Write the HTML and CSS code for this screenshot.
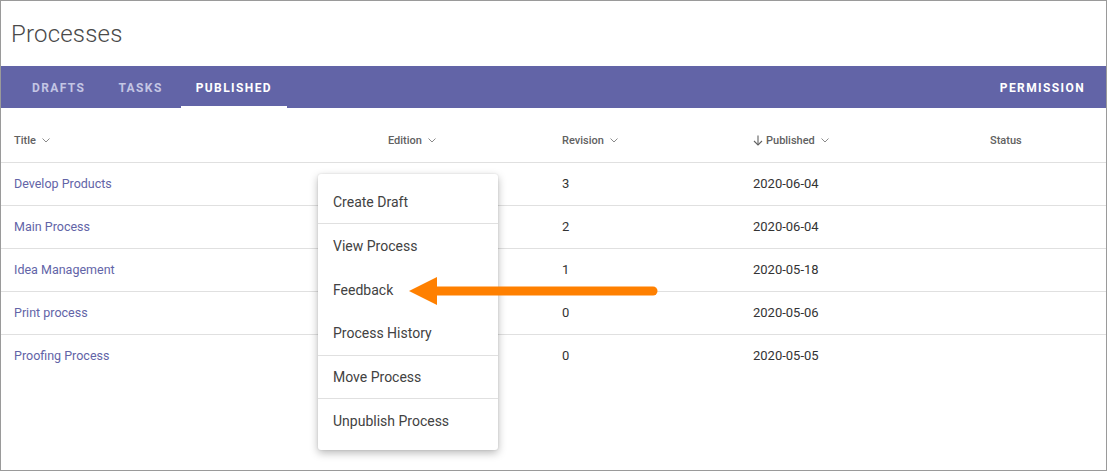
FILE: index.html
```html
<!DOCTYPE html>
<html>
<head>
<meta charset="utf-8">
<link rel="stylesheet" href="styles.css">
</head>
<body>
<div class="frame">
  <header class="page-header"><h1 class="page-title">Processes</h1></header>
  <nav class="tabbar">
    <div class="tabs">
      <a class="tab">Drafts</a>
      <a class="tab">Tasks</a>
      <a class="tab active">Published</a>
    </div>
    <a class="tab">Permission</a>
  </nav>
  <div class="table">
    <div class="row head">
      <div class="cell">Title <svg class="chev" viewBox="0 0 8 5"><polyline points="0.5,0.5 4,4 7.5,0.5"/></svg></div>
      <div class="cell">Edition <svg class="chev" viewBox="0 0 8 5"><polyline points="0.5,0.5 4,4 7.5,0.5"/></svg></div>
      <div class="cell">Revision <svg class="chev" viewBox="0 0 8 5"><polyline points="0.5,0.5 4,4 7.5,0.5"/></svg></div>
      <div class="cell"><svg class="down" viewBox="0 0 10 11"><line x1="5" y1="0.5" x2="5" y2="10"/><polyline points="1,6 5,10 9,6"/></svg>Published <svg class="chev" viewBox="0 0 8 5"><polyline points="0.5,0.5 4,4 7.5,0.5"/></svg></div>
      <div class="cell">Status</div>
    </div>
    <div class="row"><div class="cell link">Develop Products</div><div class="cell"></div><div class="cell">3</div><div class="cell">2020-06-04</div><div class="cell"></div></div>
    <div class="row"><div class="cell link">Main Process</div><div class="cell"></div><div class="cell">2</div><div class="cell">2020-06-04</div><div class="cell"></div></div>
    <div class="row"><div class="cell link">Idea Management</div><div class="cell"></div><div class="cell">1</div><div class="cell">2020-05-18</div><div class="cell"></div></div>
    <div class="row"><div class="cell link">Print process</div><div class="cell"></div><div class="cell">0</div><div class="cell">2020-05-06</div><div class="cell"></div></div>
    <div class="row last"><div class="cell link">Proofing Process</div><div class="cell"></div><div class="cell">0</div><div class="cell">2020-05-05</div><div class="cell"></div></div>
  </div>
  <ul class="menu">
    <li class="item sep">Create Draft</li>
    <li class="item">View Process</li>
    <li class="item">Feedback</li>
    <li class="item sep">Process History</li>
    <li class="item sep">Move Process</li>
    <li class="item">Unpublish Process</li>
  </ul>
  <svg class="pointer" viewBox="0 0 260 30" width="260" height="30">
    <line x1="30" y1="15" x2="246" y2="15" stroke="#ff8000" stroke-width="9" stroke-linecap="round"/>
    <polygon points="2,15 30,1 30,29" fill="#ff8000"/>
  </svg>
</div>
</body>
</html>
```

FILE: styles.css
```css
* { box-sizing: border-box; }
html, body { margin: 0; padding: 0; background: #fff; }
body { font-family: Roboto, "Noto Sans", sans-serif; }

.frame {
  position: relative;
  width: 1107px;
  height: 471px;
  border: 1px solid #9a9a9a;
  overflow: hidden;
}

.page-header {
  height: 65px;
  display: flex;
  align-items: center;
  padding-left: 10px;
}
.page-title {
  margin: 0;
  font-family: "Roboto Light", Roboto, sans-serif;
  font-size: 24px;
  font-weight: 300;
  color: #4a4a4a;
  letter-spacing: 0.2px;
}

.tabbar {
  height: 42px;
  background: #6264a7;
  display: flex;
  justify-content: space-between;
  padding: 0 6px 0 16px;
}
.tabs { display: flex; gap: 3px; }
.tab {
  display: flex;
  align-items: center;
  padding: 3px 15px 0;
  font-size: 12px;
  font-weight: 700;
  letter-spacing: 1.4px;
  text-transform: uppercase;
  color: #c4c6e4;
  border-bottom: 2px solid transparent;
}
.tab.active { color: #fff; border-bottom-color: #fff; }
.tabbar > .tab { color: #fff; }

.row {
  display: grid;
  grid-template-columns: 374px 174px 191px 237px 1fr;
  padding-left: 13px;
  padding-bottom: 2px;
  height: 43px;
  align-items: center;
  border-bottom: 1px solid #e0e0e0;
  font-size: 13px;
  color: #333;
}
.row.last { border-bottom: none; padding-bottom: 3px; }
.row.head {
  height: 55px;
  padding-top: 10px;
  padding-bottom: 0;
  font-size: 11px;
  font-weight: 500;
  color: #616161;
}
.cell { display: flex; align-items: center; }
.link { color: #6264a7; font-size: 12.5px; }

.chev {
  width: 8px; height: 5px;
  margin-left: 6px;
  fill: none;
  stroke: #8a8a8a;
  stroke-width: 1;
}
.down {
  width: 10px; height: 11px;
  margin-right: 3px;
  fill: none;
  stroke: #616161;
  stroke-width: 1.1;
}

.menu {
  position: absolute;
  left: 317px;
  top: 173px;
  width: 180px;
  margin: 0;
  padding: 6px 0 7px;
  list-style: none;
  background: #fff;
  border-radius: 3px;
  box-shadow: 0 3px 9px rgba(0,0,0,0.28), 0 0 2px rgba(0,0,0,0.12);
}
.item {
  height: 44px;
  display: flex;
  align-items: center;
  padding-left: 15px;
  font-size: 14px;
  color: #424242;
}
.item.sep { border-bottom: 1px solid #e0e0e0; }
.item:nth-child(n+4) { height: 43.6px; }

.pointer {
  position: absolute;
  left: 406px;
  top: 275px;
}
```
